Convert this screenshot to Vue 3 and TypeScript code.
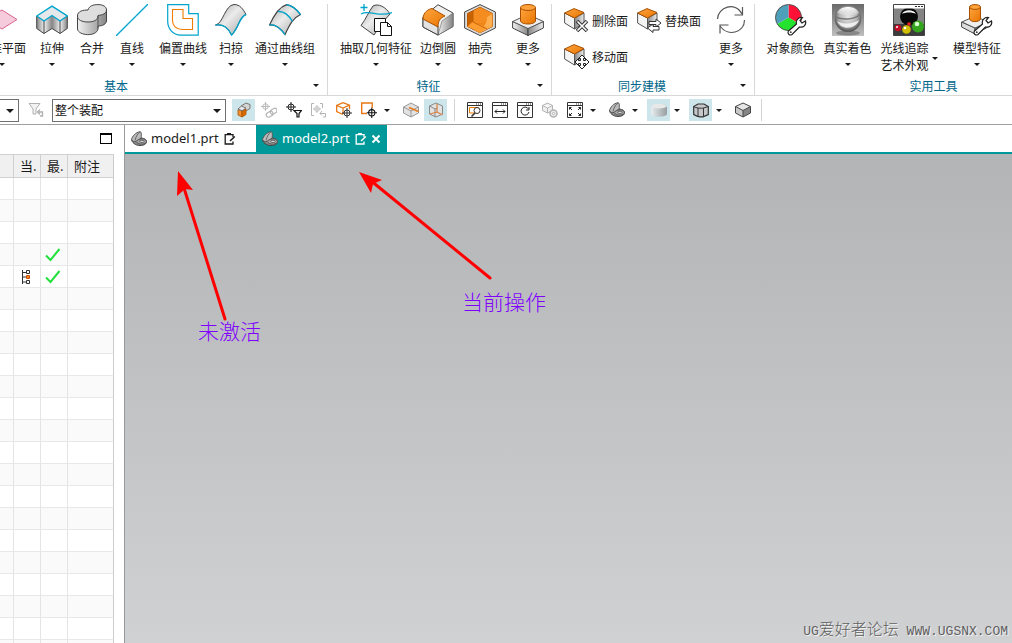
<script setup lang="ts">
import { ref } from 'vue'

interface Tool {
  icon: string
  label: string
  size: string
  menu: boolean
}

interface BarItem {
  kind: 'button' | 'menu' | 'separator'
  icon?: string
  title?: string
  active?: boolean
  disabled?: boolean
}

const basicTools: Tool[] = [
  { icon: 'plane', label: '基准平面', size: 'w60', menu: true },
  { icon: 'extrude', label: '拉伸', size: 'w40', menu: true },
  { icon: 'unite', label: '合并', size: 'w40', menu: true },
  { icon: 'line', label: '直线', size: 'w40', menu: true },
  { icon: 'offset', label: '偏置曲线', size: 'w62', menu: true },
  { icon: 'sweep', label: '扫掠', size: 'w34', menu: true },
  { icon: 'through', label: '通过曲线组', size: 'w74', menu: true },
]

const featureTools: Tool[] = [
  { icon: 'extract', label: '抽取几何特征', size: 'w80', menu: true },
  { icon: 'blend', label: '边倒圆', size: 'w44', menu: true },
  { icon: 'shell', label: '抽壳', size: 'w40', menu: true },
  { icon: 'boss', label: '更多', size: 'w56', menu: true },
]

const faceTools = [
  { icon: 'face-delete', label: '删除面' },
  { icon: 'face-replace', label: '替换面' },
  { icon: 'face-move', label: '移动面' },
]

const utilityTools: Tool[] = [
  { icon: 'colors', label: '对象颜色', size: 'w57', menu: false },
  { icon: 'sphere', label: '真实着色', size: 'w57', menu: true },
  { icon: 'raytrace', label: '光线追踪 艺术外观', size: 'w66', menu: true },
  { icon: 'model', label: '模型特征', size: 'w70', menu: true },
]

const barItems: BarItem[] = [
  { kind: 'button', icon: 's-solid', title: '选择体', active: true },
  { kind: 'button', icon: 's-link', title: '关联', disabled: true },
  { kind: 'button', icon: 's-pointfilter', title: '点过滤器' },
  { kind: 'button', icon: 's-bracket', title: '范围', disabled: true },
  { kind: 'button', icon: 's-cubepoint', title: '体上的点' },
  { kind: 'button', icon: 's-boxpoint', title: '矩形选择' },
  { kind: 'menu', title: '选择方式' },
  { kind: 'button', icon: 's-cubeedge', title: '边' },
  { kind: 'button', icon: 's-cubeaxis', title: '轴', active: true },
  { kind: 'separator' },
  { kind: 'button', icon: 's-zoomwin', title: '缩放窗口' },
  { kind: 'button', icon: 's-panwin', title: '平移' },
  { kind: 'button', icon: 's-rotwin', title: '旋转' },
  { kind: 'button', icon: 's-geargrey', title: '设置', disabled: true },
  { kind: 'button', icon: 's-fitwin', title: '适合窗口' },
  { kind: 'menu', title: '视图操作' },
  { kind: 'button', icon: 's-part', title: '部件显示' },
  { kind: 'menu', title: '部件显示选项' },
  { kind: 'button', icon: 's-shaded', title: '着色', active: true },
  { kind: 'menu', title: '着色选项' },
  { kind: 'button', icon: 's-edges', title: '带边着色', active: true },
  { kind: 'menu', title: '边选项' },
  { kind: 'button', icon: 's-iso', title: '正等测' },
  { kind: 'separator' },
]

const scope = ref('整个装配')
const filter = ref('')
const documents = ['model1.prt', 'model2.prt']
const current = ref('model2.prt')
const rows = Array.from({ length: 22 }, (_, i) => ({
  node: i === 4,
  done: i === 3 || i === 4,
}))
</script>

<template>
  <div class="app">
    <svg class="sheet" aria-hidden="true">
      <defs>
        <linearGradient id="metal" x1="0" y1="0" x2="1" y2="1">
          <stop offset="0" stop-color="#a4a4a4" /><stop offset=".45" stop-color="#ececec" /><stop offset="1" stop-color="#a0a0a0" />
        </linearGradient>
        <linearGradient id="side" x1="0" y1="0" x2="1" y2="0">
          <stop offset="0" stop-color="#858585" /><stop offset="1" stop-color="#eee" />
        </linearGradient>
        <linearGradient id="side2" x1="0" y1="0" x2="1" y2="0">
          <stop offset="0" stop-color="#f2f2f2" /><stop offset="1" stop-color="#858585" />
        </linearGradient>
        <linearGradient id="amber" x1="0" y1="0" x2="1" y2="1">
          <stop offset="0" stop-color="#ffa640" /><stop offset="1" stop-color="#e87400" />
        </linearGradient>
        <radialGradient id="ball" cx=".5" cy=".45" r=".55">
          <stop offset="0" stop-color="#e8e8e8" /><stop offset=".6" stop-color="#b4b4b4" /><stop offset="1" stop-color="#4c4c4c" />
        </radialGradient>
        <linearGradient id="gloss" x1="0" y1="0" x2="0" y2="1">
          <stop offset="0" stop-color="#fff" /><stop offset="1" stop-color="#fff" stop-opacity=".15" />
        </linearGradient>
        <linearGradient id="wall" x1="0" y1="0" x2="0" y2="1">
          <stop offset="0" stop-color="#6a6a6a" /><stop offset=".75" stop-color="#a8a8a8" /><stop offset="1" stop-color="#c0c0c0" />
        </linearGradient>
      </defs>

      <symbol id="i-plane" viewBox="0 0 32 32">
        <path d="M0 15 16 6l15 9.500L16 25z" fill="#f6cbdc" stroke="#d9638f" />
      </symbol>
      <symbol id="i-extrude" viewBox="0 0 32 32">
        <path d="M.7 12 8 17v12.500L.7 24.500z" fill="url(#side)" /><path d="M8 17l8-5.500v13l-8 5z" fill="url(#side2)" />
        <path d="M16 11.500 24 17v12.500l-8-5z" fill="url(#side)" /><path d="M24 17l7.300-5v12.500l-7.300 5z" fill="url(#side2)" />
        <path d="M.7 12v12.500L8 29.500l8-5 8 5 7.300-5V12M8 17v12.500M24 17v12.500" fill="none" stroke="#444" />
        <path d="M.7 12 16 2.200 31.300 12 24 17l-8-5.500L8 17z" fill="#e4e8ea" stroke="#00a5cc" stroke-width="1.400" />
      </symbol>
      <symbol id="i-unite" viewBox="0 0 32 32">
        <path d="M1.500 11v14c1 7 19 8 20.500 0v-3c5 0 8-2 8.500-5V5z" fill="url(#side2)" stroke="#444" />
        <path d="M1.500 12C1.500 7 7 6 12 6 13 2 17 .6 22 .6c5 0 8.500 2 8.500 5.400 0 3.500-4 5-8.500 5.500C22 16 18 18 12 18 6 18 1.500 16 1.500 12z" fill="#dedede" stroke="#444" />
        <path d="M22 12v12" stroke="#555" />
      </symbol>
      <symbol id="i-line" viewBox="0 0 32 32"><path d="M0 32 32 0" stroke="#00a5cc" stroke-width="1.300" /></symbol>
      <symbol id="i-offset" viewBox="0 0 32 32">
        <path d="M.7.700h21v9h9.500v21.500H14C5 31 .7 24 .7 17z" fill="none" stroke="#00a5cc" stroke-width="1.200" />
        <path d="M5.500 5.500H16v9h9.500v11H15c-6 0-9.500-4-9.500-9z" fill="none" stroke="#f07d00" stroke-width="1.100" />
      </symbol>
      <symbol id="i-sweep" viewBox="0 0 32 32">
        <path d="M.5 21C8 20 10 1 19 .5c6 0 9 4.500 12 10C24 13 24 24 16.500 31 13 24 9 20 .5 21z" fill="url(#metal)" stroke="#444" />
        <path d="M.5 21c8.500-1 12.500 3 16 10C24 24 24 13 31 10.500" fill="none" stroke="#00a5cc" stroke-width="1.400" />
      </symbol>
      <symbol id="i-through" viewBox="0 0 32 32">
        <path d="M.5 21C5 11 10 3 17.500.600c6 .9 10 4.500 14 9.900C24 14 21 20 16 30.500 12 25 7 20 .5 21z" fill="url(#metal)" stroke="#444" stroke-width="1.200" />
        <path d="M.5 21C7 20 12 25 16 30.500M17.500.600c6 .9 10 4.500 14 9.900M9 7.500c6-.5 11 4 14.500 10" fill="none" stroke="#00a5cc" stroke-width="1.400" />
      </symbol>
      <symbol id="i-extract" viewBox="0 0 32 32">
        <path d="M1 21.500C6 15 9 7 13 2c5-3 13 1 17 8l-8 9-8 12z" fill="url(#metal)" stroke="#444" />
        <path d="M.5 3.500h7M4 0v7M1 10c8-5 18 4 31-1.500" fill="none" stroke="#00a5cc" stroke-width="1.300" />
        <path d="M14.500 14.500h11v13h-11z" fill="#fff" stroke="#111" /><path d="M20.500 18.500h7l4 4v9h-11z" fill="#fff" stroke="#111" /><path d="M27.500 18.500v4h4" fill="none" stroke="#111" />
      </symbol>
      <symbol id="i-blend" viewBox="0 0 32 32">
        <path d="M16 .7 31 9v13.500L16 31 1 23V13z" fill="#efefef" stroke="#444" />
        <path d="M20 17l11-8v13.500L16 31z" fill="url(#side2)" stroke="#666" stroke-width=".6" />
        <path d="M1 14v9l15 8V22z" fill="#e2e2e2" stroke="#444" />
        <path d="M1 15C1 8 7 5 10 4.500L23 12c-5 2-7 5-7 11z" fill="url(#amber)" stroke="#a85000" />
      </symbol>
      <symbol id="i-shell" viewBox="0 0 32 32">
        <path d="M16 .6 31.400 8v16L16 31.500.600 24V8z" fill="#dcdcdc" stroke="#444" />
        <path d="M3.500 9.500 16 3.200 28.500 9.500v13L16 28.800 3.500 22.500z" fill="#ef8418" stroke="#a85000" />
        <path d="M3.500 9.500 9 7v10l-5.500 5.500z" fill="#c96200" />
        <path d="M9 7l7-3.800 12.500 6.300L23 13c0 4-3 6-6 6H9z" fill="#f58c20" />
        <path d="M28.500 9.500v13L16 28.800l-6-3c8 0 13-5 13-12.500z" fill="#ffae50" />
        <path d="M9 18l-5.500 4.500L16 28.800l7-5.500z" fill="#ff9c30" /><path d="M9 7v11l14 7" fill="none" stroke="#b85a00" stroke-width=".8" />
      </symbol>
      <symbol id="i-boss" viewBox="0 0 32 32">
        <path d="M.6 17.500V24L16 31.500V24z" fill="url(#side2)" stroke="#444" /><path d="M31.400 17.500V24L16 31.500V24z" fill="url(#side)" stroke="#444" />
        <path d="M16 10.500l15.400 7L16 24.500.600 17.500z" fill="#eee" stroke="#555" />
        <path d="M8.500 3.500v13.500c1 4 14 4 15 0V3.500z" fill="url(#amber)" stroke="#a85000" /><ellipse cx="16" cy="3.500" rx="7.500" ry="3" fill="#ffa23a" stroke="#a85000" />
      </symbol>
      <symbol id="i-facecube" viewBox="0 0 25 25">
        <path d="M.6 5v10L10.500 21V10z" fill="#f4f4f4" stroke="#555" /><path d="M20 5v10l-9.500 6V10z" fill="url(#side)" stroke="#555" />
        <path d="M10 .6 20 4.500 10.500 10 .6 5z" fill="url(#amber)" stroke="#a85000" />
      </symbol>
      <symbol id="i-face-delete" viewBox="0 0 25 25">
        <use href="#i-facecube" width="25" height="25" />
        <path d="M13 13l10 10M23 13 13 23" stroke="#333" stroke-width="3.600" /><path d="M13.500 13.500l9 9M22.500 13.500l-9 9" stroke="#fff" stroke-width="1.600" />
      </symbol>
      <symbol id="i-face-replace" viewBox="0 0 25 25">
        <use href="#i-facecube" width="25" height="25" />
        <path d="M12 13.500h7V11l5 4-5 4v-2.500h-7z" fill="#fff" stroke="#333" /><path d="M22 18.500h-6V16l-5.500 4 5.500 4.500V22h6z" fill="#fff" stroke="#333" />
      </symbol>
      <symbol id="i-face-move" viewBox="0 0 25 25">
        <use href="#i-facecube" width="25" height="25" />
        <path d="M18 11l3.500 3.500h-2V16.500h2v-2L25 18l-3.500 3.500v-2h-2v2h2L18 25l-3.500-3.500h2v-2h-2v2L11 18l3.500-3.500v2h2v-2h-2z" fill="#fff" stroke="#222" />
      </symbol>
      <symbol id="i-refresh" viewBox="0 0 32 32">
        <path d="M2.500 15C3 3 20-3 27 10M27.500 3v8h-8M29.500 16c0 13-17 17-24.500 6M5 29.500V21h8.500" fill="none" stroke="#555" stroke-width="1.200" />
      </symbol>
      <symbol id="i-wrench" viewBox="0 0 20 20">
        <path d="M1.500 15 9.500 8C8.500 4 11.500 1 15.500 1.500L13 4.500l2 2.500 3.500-2c1 4-2 7-6 6l-7.500 7.500c-2.500 1.500-5-1-3.500-3.500z" fill="#fff" stroke="#222" stroke-width="1.200" /><circle cx="3.800" cy="16.200" r=".9" fill="#333" />
      </symbol>
      <symbol id="i-colors" viewBox="0 0 32 32">
        <path d="M13.500 13.500V.500a13 13 0 0 1 11.300 19.500z" fill="#ff1236" /><path d="M13.500 13.500 24.800 20A13 13 0 0 1 2.200 20z" fill="#23e32f" /><path d="M13.500 13.500 2.200 20A13 13 0 0 1 13.500.500z" fill="#4d9fba" />
        <circle cx="13.500" cy="13.500" r="13" fill="none" stroke="#555" /><use href="#i-wrench" x="12" y="12" width="20" height="20" />
      </symbol>
      <symbol id="i-sphere" viewBox="0 0 32 32">
        <path d="M0 0h32v32H0z" fill="url(#wall)" /><ellipse cx="16" cy="29" rx="12" ry="2.500" fill="#888" /><circle cx="16" cy="14.500" r="13.300" fill="url(#ball)" />
        <path d="M5 9C8 1 24 1 27 9c-6 4-16 3-22 0z" fill="url(#gloss)" />
        <path d="M3.500 13c7 3 17 3 24-2" fill="none" stroke="#777" stroke-width="1.500" />
        <path d="M5 17c7 4 16 3 22-1-2 8-17 12-22 1z" fill="#fff" opacity=".8" />
      </symbol>
      <symbol id="i-raytrace" viewBox="0 0 32 32">
        <path d="M.5.500h31v31H.500z" fill="#848484" stroke="#444" /><path d="M1 20h30v11H1z" fill="#3c3c3c" />
        <circle cx="16" cy="12.500" r="9" fill="#090909" /><path d="M9 10c2-5 12-5 14 0-3-2-11-2-14 0z" fill="#f2f2f2" />
        <path d="M1 1h30v3.500H1z" fill="#fff" /><path d="M22 2.500h2M25 2.500h2M28 2.500h2" stroke="#333" />
        <circle cx="5" cy="24" r="3.300" fill="#c40d26" /><circle cx="13.500" cy="25.500" r="4.300" fill="#d2be00" /><circle cx="25" cy="22.500" r="6" fill="#35a51e" /><circle cx="16" cy="20" r="1.800" fill="#e22" />
        <circle cx="24" cy="20" r="2.300" fill="#d8ffd0" /><circle cx="12" cy="24" r="1.300" fill="#fff" /><circle cx="4" cy="23" r="1" fill="#fff" />
      </symbol>
      <symbol id="i-model" viewBox="0 0 32 32">
        <path d="M.6 18v5L14 30v-6z" fill="#ddd" stroke="#444" /><path d="M27 18v5l-13 7v-6z" fill="#aaa" stroke="#444" /><path d="M14 12l13 6-13 6-13-6z" fill="#eee" stroke="#555" />
        <path d="M8.500 3v12c1 3.500 10 3.500 11 0V3z" fill="url(#amber)" stroke="#a85000" /><ellipse cx="14" cy="3" rx="5.500" ry="2.400" fill="#ffa23a" stroke="#a85000" />
        <use href="#i-wrench" x="12" y="12" width="20" height="20" />
      </symbol>

      <symbol id="i-s-funnel" viewBox="0 0 18 18">
        <path d="M1 2.500h11L8 8v5H5V8z" fill="#f2f2f2" stroke="#b0b0b0" /><path d="M10 11h4.500v4H12M12 8.500 9.500 11l2.500 2.500" fill="none" stroke="#b0b0b0" stroke-width="1.300" />
      </symbol>
      <symbol id="i-s-solid" viewBox="0 0 16 16">
        <path d="M5 4l5-3 4 1.500v4L10 9z" fill="#d4d4d4" stroke="#777" />
        <path d="M2 7.500l4 1.500v6l-4-2z" fill="#f59030" stroke="#a85000" stroke-width=".8" /><path d="M6 9l4-2v5.500L6 15z" fill="#d96a00" stroke="#a85000" stroke-width=".8" />
        <path d="M2 7l3.500-3L10 6 6 8.800z" fill="#e6e6e6" stroke="#777" />
      </symbol>
      <symbol id="i-cross" viewBox="0 0 10 10"><circle cx="5" cy="5" r="3" fill="none" stroke="currentColor" /><path d="M5 0v10M0 5h10" stroke="currentColor" /></symbol>
      <symbol id="i-s-link" viewBox="0 0 16 16">
        <g color="#b4b4b4"><use href="#i-cross" x="0" y="0" width="9" height="9" /></g>
        <g fill="none" stroke="#b4b4b4" stroke-width="1.200"><rect x="5" y="10" width="7" height="4.500" rx="2" transform="rotate(-30 8.500 12)" /><rect x="9" y="7" width="7" height="4.500" rx="2" transform="rotate(-30 12.500 9)" /></g>
      </symbol>
      <symbol id="i-s-pointfilter" viewBox="0 0 16 16"><g color="#222"><use href="#i-cross" x="0" y="0" width="10" height="10" /></g><path d="M8 8.500h7.500l-2.500 3V15h-2v-3.500z" fill="#fff" stroke="#111" stroke-width="1.200" /></symbol>
      <symbol id="i-s-bracket" viewBox="0 0 16 16">
        <path d="M3 1.500H.500v12H3M9 1.500h2.500V6" fill="none" stroke="#b4b4b4" /><g color="#b4b4b4"><use href="#i-cross" x="2" y="3" width="8" height="8" /></g><path d="M9 11.500h5.500v3.500H12M11 9l-2 2.500 2 2" fill="none" stroke="#b4b4b4" />
      </symbol>
      <symbol id="i-s-cubepoint" viewBox="0 0 16 16"><path d="M7 .7l6.500 2.500v4M7 .7.7 3.500v6L7 12.500M.7 3.500 7 6l6.500-2.800M7 6v6" fill="none" stroke="#e87817" stroke-width="1.300" /><g color="#333"><use href="#i-cross" x="6" y="6" width="10" height="10" /></g></symbol>
      <symbol id="i-s-boxpoint" viewBox="0 0 16 16"><path d="M6 11.500H.700V1h10.500v5" fill="none" stroke="#e87817" stroke-width="1.400" /><g color="#111"><use href="#i-cross" x="5.500" y="5.500" width="10.500" height="10.500" /></g></symbol>
      <symbol id="i-s-cubeedge" viewBox="0 0 16 16"><path d="M8 1l7.500 4v6L8 15 .5 11V5z" fill="#e2e2e2" stroke="#999" /><path d="M.5 5 8 9l7.500-4M8 9v6" fill="none" stroke="#999" /><path d="M6 5.500l9.500 4" stroke="#e87817" stroke-width="1.600" /></symbol>
      <symbol id="i-s-cubeaxis" viewBox="0 0 16 16"><path d="M8 1l6.500 3v8L8 15l-6.500-3V4z" fill="#e2e2e2" stroke="#888" /><path d="M1.500 4 7 7v8M7 7l2-1" fill="none" stroke="#888" /><path d="M9 2v8l5.500 3M9 10l-7 2" fill="none" stroke="#d88040" stroke-width="1.200" /></symbol>
      <symbol id="i-window" viewBox="0 0 16 16"><path d="M.5.500h15v15H.500zM.500 3.500h15" fill="none" stroke="#333" /><path d="M9 2h1M11 2h1M13 2h1" stroke="#333" /></symbol>
      <symbol id="i-s-zoomwin" viewBox="0 0 16 16"><use href="#i-window" width="16" height="16" /><path d="M2.500 11V5.500h9V11z" fill="none" stroke="#f07d00" /><circle cx="10" cy="8.500" r="3" fill="#fff" stroke="#333" /><path d="M8 11l-3.500 3.500" stroke="#333" stroke-width="1.600" /></symbol>
      <symbol id="i-s-panwin" viewBox="0 0 16 16"><use href="#i-window" width="16" height="16" /><path d="M3 9.500h10M5 7.500l-2 2 2 2M11 7.500l2 2-2 2" fill="none" stroke="#222" /></symbol>
      <symbol id="i-s-rotwin" viewBox="0 0 16 16"><use href="#i-window" width="16" height="16" /><path d="M11.500 7A4 4 0 1 0 12 10M12 5v3H9" fill="none" stroke="#222" /></symbol>
      <symbol id="i-s-geargrey" viewBox="0 0 16 16"><path d="M.5 3.500 5.500 1l5 2.500v5l-5 2.500-5-2.500zM.5 3.500l5 2.500 5-2.500M5.500 6v5" fill="#eee" stroke="#b4b4b4" /><circle cx="11.500" cy="11.500" r="3.500" fill="#eee" stroke="#b4b4b4" stroke-width="1.600" /><circle cx="11.500" cy="11.500" r="1.200" fill="#fff" stroke="#b4b4b4" /></symbol>
      <symbol id="i-s-fitwin" viewBox="0 0 16 16"><use href="#i-window" width="16" height="16" /><path d="M2.500 7.500v-2h2M2.500 5.500 5 8M13.500 7.500v-2h-2M13.500 5.500 11 8M2.500 11.500v2h2M2.500 13.500 5 11M13.500 11.500v2h-2M13.500 13.500 11 11" fill="none" stroke="#222" /></symbol>
      <symbol id="i-s-part" viewBox="0 0 16 16">
        <path d="M.6 8.500C.6 11 4 14.500 9 14.500c4 0 6.500-1.500 6.500-4C15.500 8 12 7 9 7z" fill="#8c8c8c" stroke="#444" />
        <path d="M.6 8.500C1 5.500 5 1 9 .8c1.500 0 1.500 2 1.200 6.200L5 10.500C3 11 .6 10 .6 8.500z" fill="#bcbcbc" stroke="#555" />
        <path d="M4 9.500C5 5 7 2.500 9 .8" fill="none" stroke="#666" /><path d="M5 10.500c2-3 10-4 10.500 0 0 3-8 4-10.500 0z" fill="#a4a4a4" stroke="#555" />
        <ellipse cx="11" cy="10.300" rx="2.200" ry="1.100" fill="#f0f0f0" stroke="#444" stroke-width=".8" />
      </symbol>
      <symbol id="i-s-shaded" viewBox="0 0 16 16"><path d="M0 4.500v8c3 3 13 3 16 0v-8L12 2H4z" fill="url(#side2)" opacity=".75" /><path d="M0 4.500 4 2h8l4 2.500C13 7 3 7 0 4.500z" fill="#e8e8e8" /></symbol>
      <symbol id="i-s-edges" viewBox="0 0 16 16"><path d="M.7 4.500v8c2 1.500 4 2 6 2.300h3.300l5.300-2.300v-8L11 2H5z" fill="#c4c8ca" stroke="#333" stroke-width="1.200" /><path d="M.7 4.500c2 1.800 8 2 9.800 1.500l4.800-1.500M5 6v8.500M10.500 6v8.500" fill="none" stroke="#333" /></symbol>
      <symbol id="i-s-iso" viewBox="0 0 16 16"><path d="M.5 4.500 8 8.500V15l-7.500-4z" fill="#c8c8c8" /><path d="M15.500 4.500 8 8.500V15l7.500-4z" fill="#858585" /><path d="M8 1l7.500 3.500L8 8.500.5 4.500z" fill="#e6e6e6" /><path d="M8 1l7.500 3.500V11L8 15 .5 11V4.500zM.500 4.500 8 8.500l7.500-4M8 8.500V15" fill="none" stroke="#444" /></symbol>
      <symbol id="i-edit" viewBox="0 0 12 12"><path d="M9 4V1.700H1.200V11H9V8.500M3 .7h4" fill="none" stroke="currentColor" stroke-width="1.300" /><path d="M10.800 3.500 6 8" fill="none" stroke="currentColor" stroke-width="1.500" /></symbol>
      <symbol id="i-close" viewBox="0 0 10 10"><path d="M1.500 1.500l7 7M8.500 1.500l-7 7" stroke="currentColor" stroke-width="2" /></symbol>
      <symbol id="i-check" viewBox="0 0 16 14"><path d="M1 7.500l4.500 4.500L14.500 1" fill="none" stroke="#22e03c" stroke-width="2" /></symbol>
      <symbol id="i-tree" viewBox="0 0 8 14"><path d="M.5 0v14M.500 2.500H4M.500 7H4M.500 12H4" stroke="#333" /><path d="M4.500.500h3v3h-3zM4.500 10.500h3v3h-3z" fill="#fff" stroke="#333" /><path d="M4.500 5.500h3v3h-3z" fill="#f08a10" stroke="#d05010" /></symbol>
    </svg>

    <header class="ribbon">
      <section class="group basic" aria-label="基本">
        <div class="tools">
          <button v-for="t in basicTools" :key="t.icon" type="button" class="tool" :class="t.size">
            <svg class="big"><use :href="'#i-' + t.icon" /></svg>
            <span class="name">{{ t.label }}</span>
            <span v-if="t.menu" class="caret"></span>
          </button>
        </div>
        <footer class="title"><span>基本</span><button type="button" class="more" aria-label="基本选项"><span class="caret"></span></button></footer>
      </section>

      <section class="group feature" aria-label="特征">
        <div class="tools">
          <button v-for="t in featureTools" :key="t.icon" type="button" class="tool" :class="t.size">
            <svg class="big"><use :href="'#i-' + t.icon" /></svg>
            <span class="name">{{ t.label }}</span>
            <span v-if="t.menu" class="caret"></span>
          </button>
        </div>
        <footer class="title"><span>特征</span><button type="button" class="more" aria-label="特征选项"><span class="caret"></span></button></footer>
      </section>

      <section class="group sync" aria-label="同步建模">
        <div class="tools">
          <div class="faces">
            <button v-for="f in faceTools" :key="f.icon" type="button" class="face">
              <svg class="mid"><use :href="'#i-' + f.icon" /></svg>
              <span>{{ f.label }}</span>
            </button>
          </div>
          <button type="button" class="tool w40">
            <svg class="big"><use href="#i-refresh" /></svg>
            <span class="name">更多</span>
            <span class="caret"></span>
          </button>
        </div>
        <footer class="title"><span>同步建模</span><button type="button" class="more" aria-label="同步建模选项"><span class="caret"></span></button></footer>
      </section>

      <section class="group utility" aria-label="实用工具">
        <div class="tools">
          <button v-for="t in utilityTools" :key="t.icon" type="button" class="tool" :class="[t.size, { double: t.icon === 'raytrace' }]">
            <svg class="big"><use :href="'#i-' + t.icon" /></svg>
            <span class="name">{{ t.label }}</span>
            <span v-if="t.menu" class="caret"></span>
          </button>
        </div>
        <footer class="title"><span>实用工具</span><span class="more"></span></footer>
      </section>
    </header>

    <nav class="bar" aria-label="选择条">
      <div class="combo short">
        <select v-model="filter" aria-label="过滤器"><option value=""></option></select>
        <span class="caret"></span>
      </div>
      <button type="button" class="funnel" aria-label="重置过滤器" disabled><svg><use href="#i-s-funnel" /></svg></button>
      <div class="combo long">
        <select v-model="scope" aria-label="选择范围"><option>整个装配</option></select>
        <span class="caret"></span>
      </div>
      <template v-for="(b, i) in barItems" :key="i">
        <span v-if="b.kind === 'separator'" class="separator"></span>
        <button v-else-if="b.kind === 'menu'" type="button" class="drop" :aria-label="b.title"><span class="caret"></span></button>
        <button v-else type="button" class="cmd" :class="{ active: b.active }" :disabled="b.disabled" :aria-label="b.title">
          <svg class="small"><use :href="'#i-' + b.icon" /></svg>
        </button>
      </template>
    </nav>

    <main class="work">
      <aside class="navigator">
        <div class="navhead"><button type="button" class="restore" aria-label="还原窗口"></button></div>
        <table>
          <colgroup><col class="c1" /><col class="c2" /><col class="c2" /><col /></colgroup>
          <thead><tr><th></th><th>当.</th><th>最.</th><th>附注</th></tr></thead>
          <tbody>
            <tr v-for="(r, i) in rows" :key="i">
              <td></td>
              <td><svg v-if="r.node" class="tree"><use href="#i-tree" /></svg></td>
              <td><svg v-if="r.done" class="check"><use href="#i-check" /></svg></td>
              <td></td>
            </tr>
          </tbody>
        </table>
      </aside>

      <section class="documents">
        <div class="tabs">
          <div v-for="d in documents" :key="d" class="tab" :class="{ current: d === current }">
            <button type="button" class="open" @click="current = d">
              <svg class="small"><use href="#i-s-part" /></svg>
              <span>{{ d }}</span>
              <svg class="edit"><use href="#i-edit" /></svg>
            </button>
            <button v-if="d === current" type="button" class="close" aria-label="关闭"><svg><use href="#i-close" /></svg></button>
          </div>
        </div>
        <div class="canvas">
          <svg class="arrows" width="400" height="200" viewBox="0 0 400 200" aria-hidden="true">
            <path d="M59 34l41 131M245 26l120 98" stroke="#f00" stroke-width="3" stroke-linecap="round" />
            <path d="M53 17l15 19-8-1-8 7zM234 18l23 8-9 4-2 9z" fill="#f00" />
          </svg>
          <span class="note inactive">未激活</span>
          <span class="note working">当前操作</span>
          <p class="mark"><span class="latin">UG</span>爱好者论坛<span class="latin"> WWW.UGSNX.COM</span></p>
        </div>
      </section>
    </main>
  </div>
</template>

<style>
html,
body {
  margin: 0;
  background: #fff;
}
</style>

<style scoped>
.app {
  display: grid;
  grid-template-rows: auto auto minmax(0, 1fr);
  height: 100vh;
  overflow: hidden;
  font: 12px/17px "Noto Sans", "Noto Sans CJK SC", sans-serif;
  color: #1a1a1a;
  background: #fff;
}
.sheet {
  position: absolute;
  width: 0;
  height: 0;
}
button {
  margin: 0;
  padding: 0;
  border: 0;
  background: none;
  font: inherit;
  color: inherit;
}
svg {
  display: block;
  flex: none;
}
.caret {
  width: 0;
  height: 0;
  border: 3px solid transparent;
  border-top-color: #1a1a1a;
  border-bottom: 0;
}

.ribbon {
  display: flex;
  overflow: hidden;
  border-bottom: 1px solid #d8d8d8;
  font-family: "Noto Sans CJK SC", sans-serif;
}
.group {
  flex: none;
  box-sizing: border-box;
  padding-top: 4px;
}
.tools {
  display: flex;
  height: 71px;
  border-right: 1px solid #d8d8d8;
}
.title {
  display: flex;
  align-items: center;
  height: 20px;
  border-right: 1px solid #d8d8d8;
  color: #00668a;
}
.title > span:first-child {
  flex: 1;
  text-align: center;
}
.more {
  display: flex;
  width: 22px;
  justify-content: center;
}
.basic {
  width: 401px;
  margin-left: -73px;
}
.basic .tools {
  justify-content: flex-end;
  padding-right: 5px;
}
.feature {
  width: 224px;
}
.feature .tools {
  padding-left: 8px;
}
.sync {
  width: 203px;
}
.utility {
  width: 380px;
}
.utility .tools {
  padding-left: 7px;
}
.tool {
  display: flex;
  flex: none;
  flex-direction: column;
  align-items: center;
}
.w34 { width: 34px; }
.w40 { width: 40px; }
.w44 { width: 44px; }
.w56 { width: 56px; }
.w57 { width: 57px; }
.w60 { width: 60px; }
.w62 { width: 62px; }
.w66 { width: 66px; }
.w70 { width: 70px; }
.w74 { width: 74px; }
.w80 { width: 80px; }
.big {
  width: 32px;
  height: 32px;
}
.name {
  margin: 3px 0 7px;
  white-space: nowrap;
}
.double {
  display: grid;
  grid-template-columns: 48px 6px;
  justify-content: center;
  align-content: start;
  column-gap: 3px;
}
.double .big {
  grid-column: 1 / 3;
  justify-self: center;
}
.double .name {
  white-space: normal;
}
.double .caret {
  align-self: center;
}
.faces {
  display: grid;
  grid-template-columns: 73px 73px;
  grid-auto-rows: 36px;
  align-items: start;
  padding: 4px 1px 0 12px;
}
.face {
  display: flex;
  align-items: center;
  gap: 3px;
  white-space: nowrap;
}
.mid {
  width: 25px;
  height: 25px;
}

.bar {
  display: flex;
  align-items: center;
  height: 28px;
  gap: 2px;
  border-bottom: 1px solid #a0a0a0;
}
.combo {
  position: relative;
  flex: none;
}
.combo select {
  box-sizing: border-box;
  width: 100%;
  height: 23px;
  padding: 0 2px;
  border: 1px solid #707070;
  border-radius: 0;
  background: #fff;
  appearance: none;
  font: 12px/20px "Noto Sans CJK SC", sans-serif;
  color: #111;
}
.combo .caret {
  position: absolute;
  top: 10px;
  right: 5px;
  border-width: 4px;
  border-bottom: 0;
  pointer-events: none;
}
.short {
  width: 19px;
}
.short select {
  border-left: 0;
}
.funnel {
  width: 29px;
}
.funnel svg {
  width: 18px;
  height: 18px;
  margin: 0 auto 0 7px;
}
.long {
  width: 174px;
  margin-right: 4px;
}
.cmd {
  display: grid;
  flex: none;
  place-items: center;
  width: 23px;
  height: 22px;
}
.cmd.active {
  background: #cde6eb;
}
.small {
  width: 16px;
  height: 16px;
}
.drop {
  display: flex;
  flex: none;
  width: 15px;
  height: 22px;
  padding-left: 2px;
  align-items: center;
}
.separator {
  flex: none;
  width: 1px;
  height: 22px;
  margin: 0 6px 0 5px;
  background: #d4d4d4;
}

.work {
  display: grid;
  grid-template-columns: 124px minmax(0, 1fr);
  min-height: 0;
}
.navigator {
  overflow: hidden;
}
.navhead {
  display: flex;
  justify-content: flex-end;
  height: 21px;
  padding: 8px 12px 0 0;
}
.restore {
  width: 12px;
  height: 11px;
  border: 1px solid #000;
  border-top-width: 2px;
}
table {
  width: 114px;
  border-collapse: separate;
  border-spacing: 0;
  table-layout: fixed;
}
.c1 { width: 14px; }
.c2 { width: 27px; }
th,
td {
  box-sizing: border-box;
  height: 22px;
  padding: 0 2px 0 0;
  border-right: 1px solid #e4e4e4;
  border-bottom: 1px solid #e8e8e8;
}
th {
  height: 24px;
  padding: 0 0 0 6px;
  border-top: 1px solid #d8d8d8;
  border-color: #d0d0d0;
  background: #f0f0f0;
  font: 13px/20px "Noto Sans CJK SC", sans-serif;
  text-align: left;
  white-space: nowrap;
}
th:last-child,
td:last-child {
  border-right-color: #ccc;
}
tbody tr:nth-child(even) {
  background: #fafafa;
}
.tree {
  width: 8px;
  height: 14px;
  margin: 0 auto;
}
.check {
  width: 16px;
  height: 14px;
  margin: 0 auto;
}

.documents {
  display: flex;
  flex-direction: column;
  border-left: 1px solid #999;
}
.tabs {
  display: flex;
  border-bottom: 2px solid #009999;
  font-size: 13px;
}
.tab {
  display: flex;
  box-sizing: border-box;
  width: 131px;
  height: 27px;
  padding-left: 6px;
  gap: 4px;
  align-items: center;
}
.tab.current {
  background: #009999;
  color: #fff;
}
.open {
  display: flex;
  align-items: center;
  gap: 4px;
}
.edit {
  width: 12px;
  height: 12px;
  margin-left: 1px;
}
.close svg {
  width: 10px;
  height: 10px;
}
.canvas {
  position: relative;
  flex: 1;
  background: linear-gradient(#b3b4b6, #d0d1d3);
}
.arrows {
  position: absolute;
  top: 0;
  left: 0;
}
.note {
  position: absolute;
  font: 300 21px/24px "Noto Sans CJK SC", sans-serif;
  color: #8000ff;
}
.inactive {
  top: 164px;
  left: 73px;
}
.working {
  top: 135px;
  left: 337px;
}
.mark {
  position: absolute;
  right: 4px;
  bottom: 1px;
  margin: 0;
  font: 300 16px/20px "Noto Sans CJK SC", sans-serif;
  color: #606060;
  text-shadow: 1px 1px 0 #f2f2f2;
  white-space: pre;
}
.latin {
  font: 13px/20px "Liberation Mono", monospace;
}
</style>
